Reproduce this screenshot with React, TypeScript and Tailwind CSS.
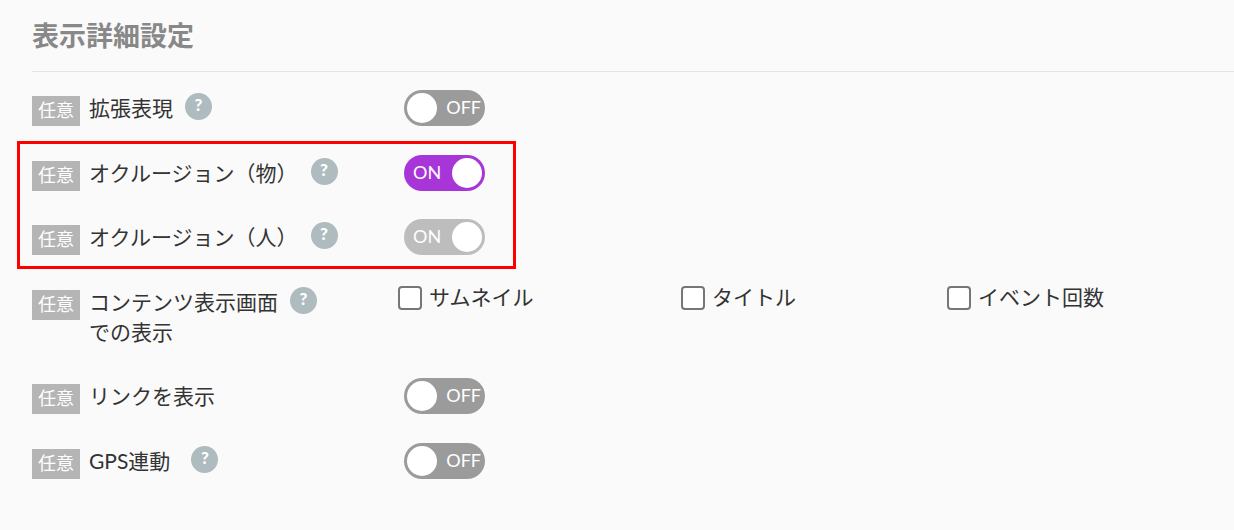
const FONT = "font-['Lato','Noto_Sans_CJK_JP',sans-serif]";

function Badge() {
  return (
    <span className="mt-[6px] flex h-[30px] w-[48px] flex-none items-center justify-center bg-[#b5b5b5] pb-[3px] text-[18px] leading-none text-white">
      任意
    </span>
  );
}

function Help({ className }: { className: string }) {
  return (
    <span
      className={`mt-[3px] flex h-[27px] w-[27px] flex-none items-center justify-center rounded-full bg-[#aebbbf] pb-[4px] text-[17px] font-black leading-none text-white ${className}`}
    >
      ?
    </span>
  );
}

function Toggle({ kind }: { kind: "off" | "on" | "disabled" }) {
  if (kind === "off") {
    return (
      <div className="flex h-[36px] w-[81px] items-center justify-between rounded-full bg-[#9b9b9b] px-[3px]">
        <span className="h-[30px] w-[30px] rounded-full bg-white" />
        <span className="pb-[2px] pr-[1px] text-[18px] leading-none text-white">OFF</span>
      </div>
    );
  }
  return (
    <div
      className={`flex h-[36px] w-[81px] items-center justify-between rounded-full pl-[9px] pr-[3px] ${
        kind === "on" ? "bg-[#a835d8]" : "bg-[#bdbdbd]"
      }`}
    >
      <span className="pb-[2px] text-[18px] leading-none text-white">ON</span>
      <span className="h-[30px] w-[30px] rounded-full bg-white" />
    </div>
  );
}

function Row({
  label,
  help,
  kind,
}: {
  label: string;
  help?: string;
  kind: "off" | "on" | "disabled";
}) {
  return (
    <div className="flex h-[36px] items-start">
      <div className="flex w-[372px] items-start">
        <Badge />
        <span className="ml-[9px] mt-[3px] text-[21px] leading-[30px] text-[#333]">{label}</span>
        {help && <Help className={help} />}
      </div>
      <Toggle kind={kind} />
    </div>
  );
}

function Check({ label, width }: { label: string; width: string }) {
  return (
    <label className={`flex items-start ${width}`}>
      <span className="mt-[2px] h-[24px] w-[24px] flex-none rounded-[4px] border-2 border-[#767676] bg-white" />
      <span className="ml-[7px] text-[21px] leading-[26px] text-[#333]">{label}</span>
    </label>
  );
}

export default function App() {
  return (
    <div className={`h-[530px] w-[1234px] overflow-hidden bg-[#fafafa] pl-[32px] ${FONT}`}>
      <div className="flex h-[72px] items-center border-b border-[#e4e4e4]">
        <h2 className="-mt-[1px] text-[27px] font-bold leading-none text-[#888]">表示詳細設定</h2>
      </div>

      <div className="mt-[18px]">
        <Row label="拡張表現" help="ml-[12px]" kind="off" />
      </div>

      <div className="-ml-[15px] mt-[15px] flex w-[499px] flex-col gap-[28px] border-3 border-[#ff0000] py-[11px] pl-[12px]">
        <Row label="オクルージョン（物）" help="ml-[13px]" kind="on" />
        <Row label="オクルージョン（人）" help="ml-[13px]" kind="disabled" />
      </div>

      <div className="mt-[15px] flex h-[64px] items-start">
        <div className="flex w-[366px] items-start">
          <Badge />
          <span className="ml-[9px] mt-[3px] w-[189px] text-[21px] leading-[30px] text-[#333]">
            コンテンツ表示画面での表示
          </span>
          <Help className="ml-[12px]" />
        </div>
        <Check label="サムネイル" width="w-[283px]" />
        <Check label="タイトル" width="w-[266px]" />
        <Check label="イベント回数" width="w-[200px]" />
      </div>

      <div className="mt-[30px]">
        <Row label="リンクを表示" kind="off" />
      </div>

      <div className="mt-[29px]">
        <Row label="GPS連動" help="ml-[21px]" kind="off" />
      </div>
    </div>
  );
}
